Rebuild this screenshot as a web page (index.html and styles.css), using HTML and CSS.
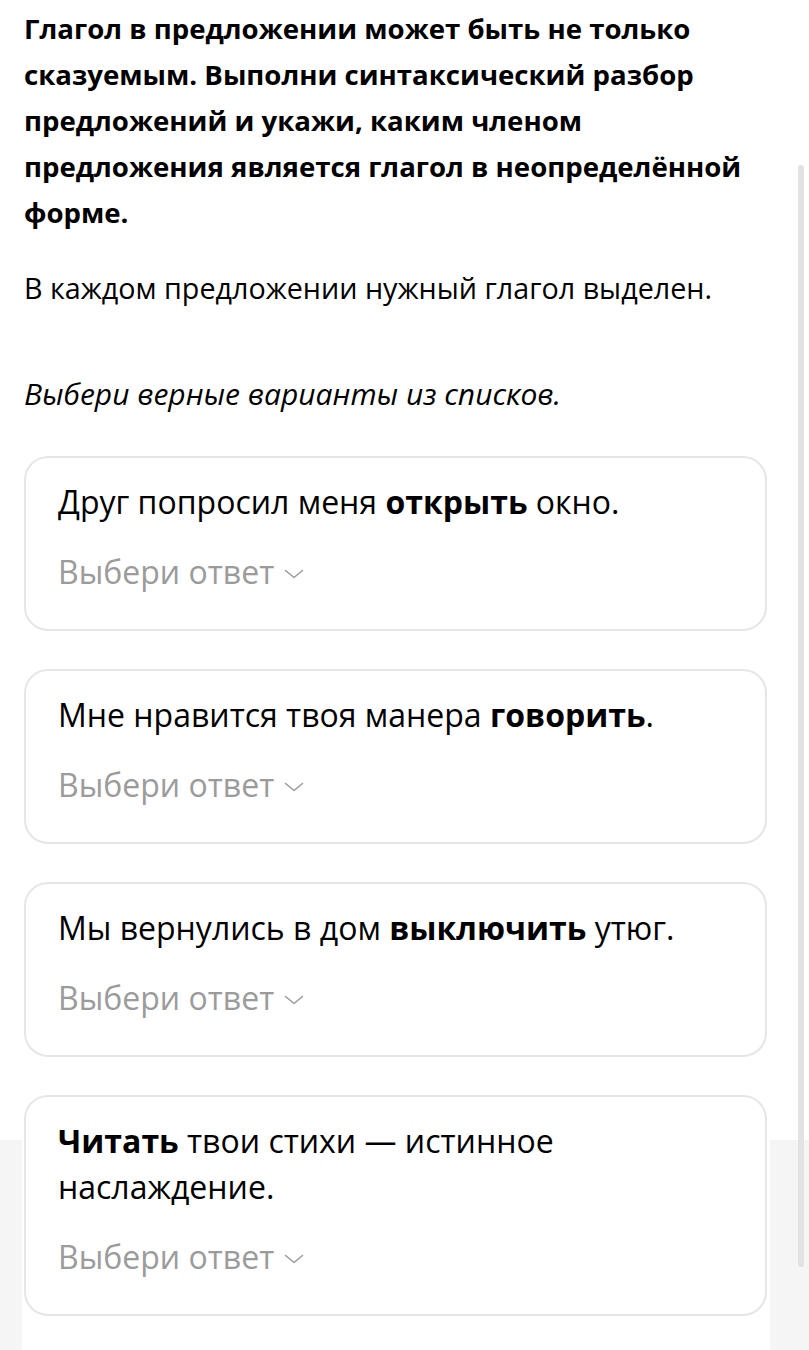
FILE: index.html
```html
<!DOCTYPE html>
<html lang="ru">
<head>
<meta charset="utf-8">
<title>Задание</title>
<link rel="stylesheet" href="styles.css">
</head>
<body>
<main class="task">
  <h1 class="task-title">Глагол в предложении может быть не только сказуемым. Выполни синтаксический разбор предложений и укажи, каким членом предложения является глагол в неопределённой форме.</h1>
  <p class="task-note">В каждом предложении нужный глагол выделен.</p>
  <p class="task-hint">Выбери верные варианты из списков.</p>

  <div class="cards">
    <section class="card">
      <p class="sentence">Друг попросил меня <b>открыть</b> окно.</p>
      <div class="select">Выбери ответ<svg class="chev" width="20" height="10" viewBox="0 0 20 10"><path d="M1.5 1.5 L10 8.5 L18.5 1.5" fill="none" stroke="#9b9b9b" stroke-width="1.6" stroke-linecap="round" stroke-linejoin="round"/></svg></div>
    </section>
    <section class="card">
      <p class="sentence">Мне нравится твоя манера <b>говорить</b>.</p>
      <div class="select">Выбери ответ<svg class="chev" width="20" height="10" viewBox="0 0 20 10"><path d="M1.5 1.5 L10 8.5 L18.5 1.5" fill="none" stroke="#9b9b9b" stroke-width="1.6" stroke-linecap="round" stroke-linejoin="round"/></svg></div>
    </section>
    <section class="card">
      <p class="sentence">Мы вернулись в дом <b>выключить</b> утюг.</p>
      <div class="select">Выбери ответ<svg class="chev" width="20" height="10" viewBox="0 0 20 10"><path d="M1.5 1.5 L10 8.5 L18.5 1.5" fill="none" stroke="#9b9b9b" stroke-width="1.6" stroke-linecap="round" stroke-linejoin="round"/></svg></div>
    </section>
    <section class="card">
      <p class="sentence"><b>Читать</b> твои стихи — истинное наслаждение.</p>
      <div class="select">Выбери ответ<svg class="chev" width="20" height="10" viewBox="0 0 20 10"><path d="M1.5 1.5 L10 8.5 L18.5 1.5" fill="none" stroke="#9b9b9b" stroke-width="1.6" stroke-linecap="round" stroke-linejoin="round"/></svg></div>
    </section>
  </div>
</main>
<div class="scrollbar"></div>
</body>
</html>
```
FILE: styles.css
```css
html, body {
  margin: 0;
  padding: 0;
}
body {
  width: 809px;
  height: 1350px;
  overflow: hidden;
  position: relative;
  font-family: "Open Sans", "Noto Sans", "DejaVu Sans", sans-serif;
  color: #000;
  background-color: #fff;
  background-image: linear-gradient(to right, #f5f5f5 0, #f5f5f5 22px, #fff 22px, #fff 770px, #f5f5f5 770px, #f5f5f5 100%);
  background-repeat: no-repeat;
  background-position: 0 1140px;
  background-size: 100% 210px;
}
.task {
  width: 746px;
  padding: 5px 0 0 24px;
}
.task-title {
  margin: 0;
  font-size: 27.6px;
  line-height: 46px;
  font-weight: 700;
}
.task-note {
  margin: 33px 0 0;
  font-size: 28.7px;
  line-height: 40px;
}
.task-hint {
  margin: 66px 0 0;
  font-size: 30px;
  line-height: 40px;
  font-style: italic;
}
.cards {
  margin: 42px 3px 0 0;
  display: flex;
  flex-direction: column;
  gap: 38px;
}
.card {
  border: 2px solid #e6e6e6;
  border-radius: 24px;
  background: #fff;
  padding: 21px 32px 34px 32px;
  display: flex;
  flex-direction: column;
  gap: 24px;
}
.sentence {
  margin: 0;
  font-size: 32px;
  line-height: 46px;
}
.sentence b {
  font-weight: 700;
}
.select {
  display: flex;
  align-items: center;
  font-size: 32px;
  line-height: 46px;
  color: #9b9b9b;
}
.chev {
  margin-left: 10px;
  margin-top: 4px;
}
.scrollbar {
  position: absolute;
  left: 798px;
  top: 165px;
  width: 6px;
  height: 1102px;
  border-radius: 3px;
  background: #e2e2e2;
}
```
